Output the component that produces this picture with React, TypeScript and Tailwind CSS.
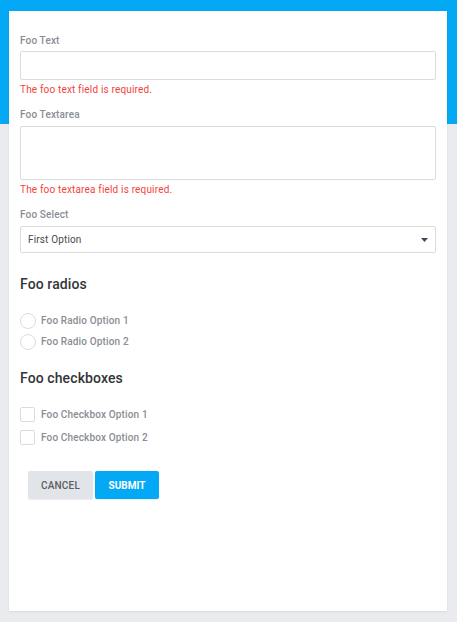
import React from "react";

const font = { fontFamily: "Roboto, 'Liberation Sans', sans-serif" };

function Label({ children, mb }: { children: React.ReactNode; mb: string }) {
  return (
    <div className={`text-[10px] leading-[14px] font-medium tracking-[0.15px] text-[#8a8d94] ${mb}`}>{children}</div>
  );
}

function ErrorText({ children }: { children: React.ReactNode }) {
  return <div className="mt-[3px] text-[10px] leading-[14px] tracking-[0.17px] text-[#f4433a]">{children}</div>;
}

export default function App() {
  return (
    <div className="relative min-h-[622px] w-[457px] bg-[#e9ebee]" style={font}>
      <div className="absolute left-0 top-0 h-[124px] w-full bg-[#03a9f4]" />
      <div className="relative ml-[9px] mr-[10px] pt-[11px]">
        <div className="flex h-[600px] flex-col bg-white px-[11px] pt-[23px] shadow-[0_1px_2px_rgba(0,0,0,0.08)]">
          <Label mb="mb-[3px]">Foo Text</Label>
          <input className="h-[29px] w-full rounded-[2px] border border-[#dcdcdc] bg-white outline-none" />
          <ErrorText>The foo text field is required.</ErrorText>

          <div className="mt-[11px]">
            <Label mb="mb-[4px]">Foo Textarea</Label>
          </div>
          <textarea className="block h-[54px] w-full resize-none rounded-[2px] border border-[#dcdcdc] bg-white outline-none" />
          <ErrorText>The foo textarea field is required.</ErrorText>

          <div className="mt-[11px]">
            <Label mb="mb-[4px]">Foo Select</Label>
          </div>
          <div className="flex h-[27px] w-full items-center justify-between rounded-[2px] border border-[#dcdcdc] bg-white pl-[7px] pr-[7px]">
            <span className="text-[10px] leading-[14px] tracking-[0.15px] text-[#4a4a4a]">First Option</span>
            <svg width="7" height="4" viewBox="0 0 7 4">
              <path d="M0 0 L7 0 L3.5 4 Z" fill="#3d4a5c" />
            </svg>
          </div>

          <div className="mt-[21px] text-[14px] leading-[20px] font-medium tracking-[0.1px] text-[#333639]">Foo radios</div>
          <div className="mt-[19px] flex flex-col gap-[5px]">
            {["Foo Radio Option 1", "Foo Radio Option 2"].map((t) => (
              <div key={t} className="flex h-[16px] items-center">
                <span className="h-[16px] w-[16px] rounded-full border border-[#dcdcdc] bg-white" />
                <span className="ml-[5px] text-[10px] leading-[14px] font-medium tracking-[0.15px] text-[#8a8d94]">{t}</span>
              </div>
            ))}
          </div>

          <div className="mt-[18px] text-[14px] leading-[20px] font-medium tracking-[0.1px] text-[#333639]">Foo checkboxes</div>
          <div className="mt-[19px] flex flex-col gap-[8px]">
            {["Foo Checkbox Option 1", "Foo Checkbox Option 2"].map((t) => (
              <div key={t} className="flex h-[15px] items-center">
                <span className="h-[15px] w-[15px] rounded-[2px] border border-[#dcdcdc] bg-white" />
                <span className="ml-[6px] text-[10px] leading-[14px] font-medium tracking-[0.15px] text-[#8a8d94]">{t}</span>
              </div>
            ))}
          </div>

          <div className="ml-[8px] mt-[26px] flex gap-[2px]">
            <button className="h-[28px] w-[65px] rounded-[2px] bg-[#e1e4e8] text-[10px] font-medium tracking-[0.2px] text-[#5b5e63] shadow-[0_1px_1px_rgba(0,0,0,0.08)]">
              CANCEL
            </button>
            <button className="h-[28px] w-[64px] rounded-[2px] bg-[#03a9f4] text-[10px] font-bold text-white shadow-[0_1px_1px_rgba(0,0,0,0.08)]">
              SUBMIT
            </button>
          </div>
        </div>
      </div>
    </div>
  );
}
